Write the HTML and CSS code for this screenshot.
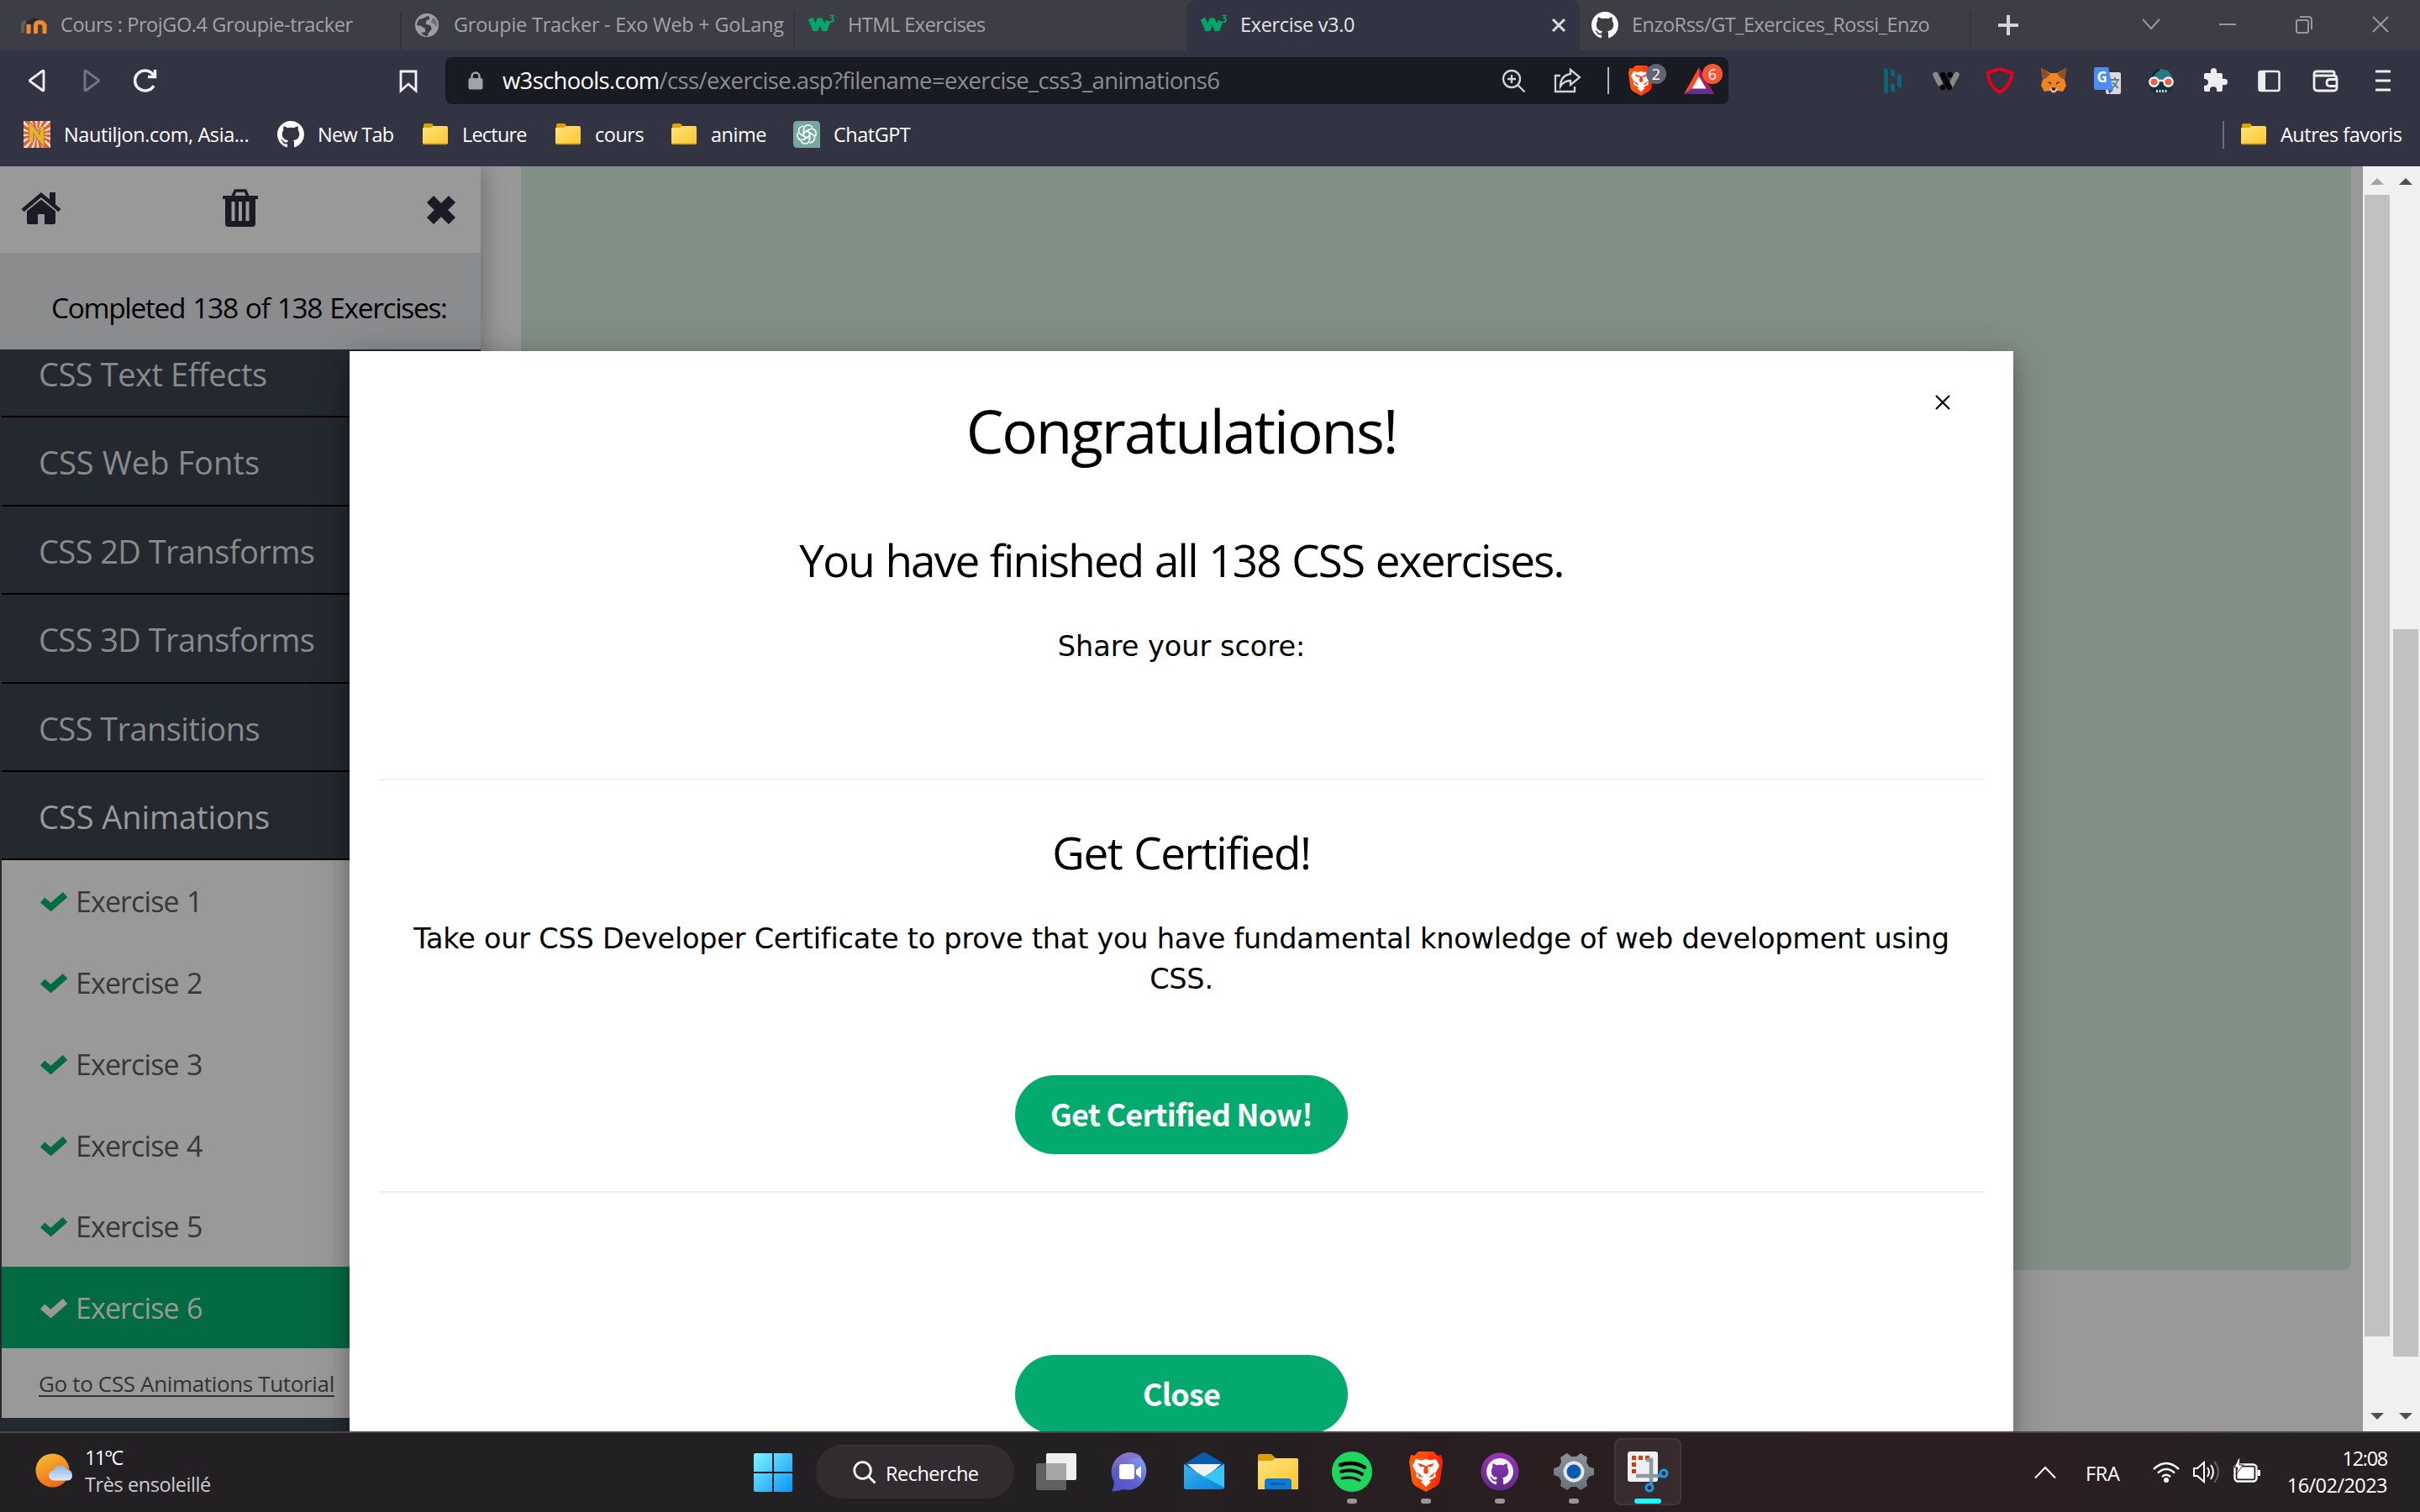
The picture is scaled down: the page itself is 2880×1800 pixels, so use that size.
FILE: index.html
```html
<!DOCTYPE html>
<html lang="fr">
<head>
<meta charset="utf-8">
<title>Exercise v3.0</title>
<link rel="stylesheet" href="styles.css">
</head>
<body>
<svg class="defs" width="0" height="0" aria-hidden="true">
  <defs>
    <linearGradient id="gFolder" x1="0" y1="0" x2="1" y2="1"><stop offset="0" stop-color="#ffe47c"/><stop offset="1" stop-color="#fdc52f"/></linearGradient>
    <linearGradient id="gWin" gradientUnits="userSpaceOnUse" x1="0" y1="0" x2="46" y2="46"><stop offset="0" stop-color="#7df5ff"/><stop offset="1" stop-color="#0a94ff"/></linearGradient>
    <linearGradient id="gChat" x1="0" y1="1" x2="0.8" y2="0"><stop offset="0" stop-color="#5050c8"/><stop offset="0.45" stop-color="#5b5fd0"/><stop offset="1" stop-color="#8aa0f0"/></linearGradient>
    <linearGradient id="gMail" x1="0" y1="0" x2="1" y2="1"><stop offset="0" stop-color="#34b9f0"/><stop offset="1" stop-color="#0f7fd8"/></linearGradient>
    <linearGradient id="gSun" x1="0.2" y1="0" x2="0.7" y2="1"><stop offset="0" stop-color="#f2bd32"/><stop offset="1" stop-color="#f0650f"/></linearGradient>
    <linearGradient id="gCloud" x1="0" y1="0" x2="0" y2="1"><stop offset="0" stop-color="#8fb2ee"/><stop offset="1" stop-color="#dce9fc"/></linearGradient>
    <linearGradient id="gLion" x1="0" y1="0" x2="1" y2="0"><stop offset="0" stop-color="#ff5a0a"/><stop offset="0.5" stop-color="#ff4a10"/><stop offset="1" stop-color="#ff1c00"/></linearGradient>
    <linearGradient id="gGit" x1="0" y1="0" x2="0" y2="1"><stop offset="0" stop-color="#9a35b8"/><stop offset="1" stop-color="#5b2a86"/></linearGradient>
    <linearGradient id="gGear" x1="0" y1="0" x2="0" y2="1"><stop offset="0" stop-color="#8b9197"/><stop offset="1" stop-color="#66727c"/></linearGradient>
  </defs>
  <symbol id="octocat" viewBox="0 0 16 16"><path d="M8 0C3.58 0 0 3.58 0 8c0 3.54 2.29 6.53 5.47 7.59.4.07.55-.17.55-.38 0-.19-.01-.82-.01-1.49-2.01.37-2.53-.49-2.69-.94-.09-.23-.48-.94-.82-1.13-.28-.15-.68-.52-.01-.53.63-.01 1.08.58 1.23.82.72 1.21 1.87.87 2.33.66.07-.52.28-.87.51-1.07-1.78-.2-3.64-.89-3.64-3.95 0-.87.31-1.59.82-2.15-.08-.2-.36-1.02.08-2.12 0 0 .67-.21 2.2.82.64-.18 1.32-.27 2-.27.68 0 1.36.09 2 .27 1.53-1.04 2.2-.82 2.2-.82.44 1.1.16 1.92.08 2.12.51.56.82 1.27.82 2.15 0 3.07-1.87 3.75-3.65 3.95.29.25.54.73.54 1.48 0 1.07-.01 1.93-.01 2.2 0 .21.15.46.55.38A8.013 8.013 0 0016 8c0-4.42-3.58-8-8-8z"/></symbol>
  <symbol id="folder" viewBox="0 0 32 32"><path d="M2 5q0-2 2-2h7q2 0 2.500 2l.5 2H28v6H2z" fill="#dda100"/><path d="M1 9q0-1 1-1l9 0 3-2h15q2 0 2 2v18q0 2-2 2H3q-2 0-2-2z" fill="url(#gFolder)"/><path d="M2 27.500h28" stroke="#c08f1c" stroke-width="1.500"/></symbol>
  <symbol id="w3" viewBox="0 0 32 32"><path d="M3.500 8l6 14 5-13.500 6 13.500 4-11" fill="none" stroke="#04a56b" stroke-width="6" stroke-linejoin="bevel"/><path d="M26.500 4.500h4.500l-2.500 3q3 0 2.500 2.500t-4 2" fill="none" stroke="#04a56b" stroke-width="1.600"/></symbol>
  <symbol id="check" viewBox="0 0 32 24"><path d="M2.500 10.500l10 8.500L29.500 4" fill="none" stroke="currentColor" stroke-width="8"/></symbol>
  <symbol id="lion" viewBox="0 0 40 48"><path d="M11 0h18l5 5 4-1 2 8-3 22q-1 5-6 8l-11 6-11-6q-5-3-6-8L0 12l2-8 4 1z" fill="url(#gLion)"/><path d="M8 9l7 1.500L20 9l5 1.500L32 9l4 8-5 9 1 4-7 4-5 3-5-3-7-4 1-4-5-9zM14 36l6-3 6 3-6 6z" fill="#fff"/><path d="M10 14l8 2v2l-5 0zM30 14l-8 2v2l5 0zM18 17h4l1 8-3 2-3-2zM9 24l8 7-5-1zM31 24l-8 7 5-1z" fill="#ff4310"/></symbol>
</svg>

<div class="desktop">
  <header class="browser">
    <div class="tabs">
      <div class="tab tab-first">
        <svg class="i32" viewBox="0 0 32 32"><path d="M4 13L17 7l9 4-9 5z" fill="#29292d"/><path d="M3 25V16q0-4 4-4" stroke="#6c5b55" stroke-width="4" fill="none"/><path d="M10 26V15M18.500 26V16q0-3.500 4.500-3.500t6 3.500v10" stroke="#f08a2c" stroke-width="5" fill="none"/></svg>
        <span class="t1">Cours : ProjGO.4 Groupie-tracker</span>
      </div>
      <div class="tab">
        <svg class="i32" viewBox="0 0 32 32"><circle cx="16" cy="16" r="14" fill="#9b9ea9"/><path d="M17 5q3 1 2 4l-4 2 0 4 5 1 2 4-4 5-1 4q-5 0-8-4l5-1 0-4-5-3-5-1q0-4 3-7l4-1z" fill="#3d3d45"/><path d="M24 7q5 5 4 11l-4-4-3-1 1-4z" fill="#3d3d45" opacity="0.500"/></svg>
        <span class="t2">Groupie Tracker - Exo Web + GoLang</span>
      </div>
      <div class="tab tab-plain">
        <svg class="i32"><use href="#w3"/></svg>
        <span class="t3">HTML Exercises</span>
      </div>
      <div class="tab tab-active">
        <svg class="i32"><use href="#w3"/></svg>
        <span class="t4">Exercise v3.0</span>
        <svg class="tab-close" viewBox="0 0 18 18"><path d="M2 2l14 14M16 2L2 16" stroke="#dcdce0" stroke-width="3"/></svg>
      </div>
      <div class="tab tab-last">
        <svg class="i32 white"><use href="#octocat"/></svg>
        <span class="t5">EnzoRss/GT_Exercices_Rossi_Enzo</span>
      </div>
      <svg class="tab-new" viewBox="0 0 26 26"><path d="M13 1v24M1 13h24" stroke="#d4d4d8" stroke-width="4"/></svg>
      <div class="window-buttons">
        <svg viewBox="0 0 24 24"><path d="M2 6l10 11L22 6"/></svg>
        <svg viewBox="0 0 24 24"><path d="M2 12h20"/></svg>
        <svg viewBox="0 0 24 24"><rect x="3" y="7" width="14" height="15" rx="2"/><path d="M7 3h10q4 0 4 4v11"/></svg>
        <svg viewBox="0 0 24 24"><path d="M3 3l18 18M21 3L3 21"/></svg>
      </div>
    </div>

    <div class="toolbar">
      <div class="nav">
        <svg viewBox="0 0 32 32"><path d="M24 5v22q0 1.500-1.500.5L8 17q-1-1 0-2L22.500 4.500Q24 3.500 24 5z"/></svg>
        <svg class="dim" viewBox="0 0 32 32"><path d="M9 5v22q0 1.500 1.500.5L25 17q1-1 0-2L10.500 4.500Q9 3.500 9 5z"/></svg>
        <svg viewBox="0 0 32 32"><path d="M27 22A12 12 0 1 1 27 10" stroke-width="3.500"/><path d="M28.500 3v8.500h-8.500" stroke-width="3.500"/></svg>
        <svg class="nav-mark" viewBox="0 0 32 32"><path d="M7 5h18v23l-9-8-9 8z"/></svg>
      </div>
      <div class="url">
        <svg class="lock" viewBox="0 0 18 22"><rect x="0.500" y="8" width="17" height="13.500" rx="2" fill="#a0a3ae"/><path d="M4.500 9V6a4.500 4.500 0 0 1 9 0v3" fill="none" stroke="#a0a3ae" stroke-width="2.500"/></svg>
        <span class="host">w3schools.com</span><span class="path">/css/exercise.asp?filename=exercise_css3_animations6</span>
        <div class="url-icons">
          <svg class="i32 line" viewBox="0 0 32 32"><circle cx="13" cy="14" r="10"/><path d="M20.500 21.500l8 8M8 14h10M13 9v10"/></svg>
          <svg class="i32 line" viewBox="0 0 32 32"><path d="M7 10H1v19h23v-6"/><path d="M19 3l11 9-11 9v-5q-8 0-12 7 0-13 12-15z"/></svg>
          <i class="bar"></i>
          <span class="shield"><svg viewBox="0 0 40 48"><use href="#lion"/></svg><b>2</b></span>
          <span class="bat"><svg viewBox="0 0 36 32"><path d="M18 0L0 32l10-6 8-14z" fill="#ff4c24"/><path d="M18 0l18 32-10-6-8-14z" fill="#9e1f63"/><path d="M0 32h36l-10-7H10z" fill="#662d91"/><path d="M18 11l8.500 14.500h-17z" fill="#fff"/></svg><b>6</b></span>
        </div>
      </div>
      <div class="extensions">
        <svg viewBox="0 0 32 32"><g fill="#0d6475"><path d="M6 1l5 1.500v29L6 30zM14 2l5 2v8l-5-2zM14 19l5 2v9l-5-2zM22 8l5 2v15l-5-2z"/></g></svg>
        <svg viewBox="0 0 32 32"><g stroke-width="6.500" stroke-linecap="round"><path d="M3.500 9l5 10M28.500 9l-7 13" stroke="#8b8888"/><path d="M12 9l8 15M12 24h.1M20.500 9h.1" stroke="#050507"/></g></svg>
        <svg viewBox="0 0 32 32"><path d="M16 2l14 4.500q0 15-14 23.500Q2 21.500 2 6.500z" fill="none" stroke="#e8001d" stroke-width="3.800"/></svg>
        <svg viewBox="0 0 32 32"><path d="M1 1l11 6h8l11-6-2 14 2 7-4 7-7-1-4 3-4-3-7 1-4-7 2-7z" fill="#f08423"/><path d="M1 1l11 7-5 5-4 2zM31 1L20 8l5 5 4 2z" fill="#8f4f27"/><path d="M8 17l5 1v3zM24 17l-5 1v3z" fill="#3c3b44"/><path d="M11 26l3-1h4l3 1-3 4h-4z" fill="#d8c4b6"/><path d="M13.500 24.500h5l-1 3h-3z" fill="#161616"/></svg>
        <svg viewBox="0 0 32 32"><rect x="14" y="6" width="18" height="26" rx="2" fill="#d9dadd"/><path d="M2 0h15l6 27H2q-2 0-2-2V2q0-2 2-2z" fill="#4b8cf5"/><path d="M17 27h6l-5 5z" fill="#3b55c2"/><text x="3.500" y="18" class="g">G</text><path d="M20 15h10M25 12v3M28 16q-2 6-7 9M22 18l7 7" stroke="#647b88" stroke-width="1.800" fill="none"/></svg>
        <svg viewBox="0 0 32 32"><path d="M3 30V15Q3 2 16 2t13 13v15z" fill="#173039"/><path d="M3 15Q5 2 16 2q13 1 13 13z" fill="#2e7585"/><path d="M5 13Q7 5 14 3" stroke="#12242b" stroke-width="2.500" fill="none"/><g fill="#e8634a" stroke="#fff" stroke-width="2.200"><circle cx="7.500" cy="17.500" r="5.200"/><circle cx="24.500" cy="17.500" r="5.200"/></g><path d="M13 16h6" stroke="#fff" stroke-width="2.500"/><path d="M10 28.500h13" stroke="#bfe4ea" stroke-width="3" stroke-dasharray="2 1.500"/></svg>
        <svg viewBox="0 0 32 32"><path d="M3 9q0-2 2-2h6q-1-6 3.500-6T18 7h5q2 0 2 2v5q6-1 6 3.500T25 21v6q0 2-2 2h-5q1-6-4-6t-4 6H5q-2 0-2-2v-5q5 0 5-4t-5-4z" fill="#eeeeef"/></svg>
        <svg viewBox="0 0 32 32"><rect x="4.500" y="5" width="24" height="23" rx="2" fill="none" stroke="#eeeeef" stroke-width="2.500"/><path d="M4 5h8v23H4z" fill="#eeeeef"/></svg>
        <svg class="wallet" viewBox="0 0 32 32"><g fill="none" stroke="#eeeeef" stroke-width="2.800"><path d="M26 10V7q0-2-2-2H5Q2 5 2 8v16q0 4 4 4h19q4 0 4-4V14q0-4-4-4H3M30 14.500H21q-4 0-4 4t4 4h9"/></g></svg>
        <svg class="menu" viewBox="0 0 32 32"><path d="M7 5h18M7 16h18M7 27h18" stroke="#eeeeef" stroke-width="3"/></svg>
      </div>
    </div>

    <div class="bookmarks">
      <div class="bm"><svg class="i32 clip" viewBox="0 0 32 32"><rect width="32" height="32" fill="#f3e3da"/><circle cx="16" cy="16" r="14" fill="none" stroke="#de6038" stroke-width="20" stroke-dasharray="3.200 2.300"/><path d="M9 25V7l13 17V7" fill="none" stroke="#a9702f" stroke-width="6.500"/><path d="M9 25V7l13 17V7" fill="none" stroke="#eeb02c" stroke-width="4.500"/></svg><span class="b1">Nautiljon.com, Asia...</span></div>
      <div class="bm"><svg class="i32 white"><use href="#octocat"/></svg><span class="b2">New Tab</span></div>
      <div class="bm"><svg class="i32"><use href="#folder"/></svg><span class="b3">Lecture</span></div>
      <div class="bm"><svg class="i32"><use href="#folder"/></svg><span class="b4">cours</span></div>
      <div class="bm"><svg class="i32"><use href="#folder"/></svg><span class="b5">anime</span></div>
      <div class="bm"><svg class="i32" viewBox="0 0 32 32"><path d="M5 0h22q5 0 5 5v27H5q-5 0-5-5V5q0-5 5-5z" fill="#75a99c"/><g fill="none" stroke="#fff" stroke-width="1.600"><path id="petal" d="M12.500 18V9.500q1-5 6-4.500 3 .5 4.500 3M12.500 14l6.500-3.800"/><use href="#petal" transform="rotate(60 16 16)"/><use href="#petal" transform="rotate(120 16 16)"/><use href="#petal" transform="rotate(180 16 16)"/><use href="#petal" transform="rotate(240 16 16)"/><use href="#petal" transform="rotate(300 16 16)"/></g></svg><span class="b6">ChatGPT</span></div>
      <div class="bm bm-other"><svg class="i32"><use href="#folder"/></svg><span class="b7">Autres favoris</span></div>
    </div>
  </header>

  <main class="page">
    <aside class="sidebar">
      <div class="side-icons">
        <svg viewBox="0 0 48 40"><path d="M24 9.500L7 23v14q0 2 2 2h11V27h8v12h11q2 0 2-2V23z"/><path d="M2 22.500L24 4l22 18.500" fill="none" stroke="#1a1b24" stroke-width="4.500"/><path d="M7 22.500L24 8.500l17 14" fill="none" stroke="#999" stroke-width="1.500"/><path d="M34 1h7v16l-7-6z"/></svg>
        <svg viewBox="0 0 42 46"><path d="M12 9l3-7h12l3 7" fill="none" stroke="#1a1b24" stroke-width="3.500"/><path d="M0 8h42v4h-3v29q0 4-4 4H7q-4 0-4-4V12H0z"/><path d="M12.500 15v23M21 15v23M29.500 15v23" stroke="#999" stroke-width="4"/></svg>
        <svg viewBox="0 0 36 36"><path d="M5 5l26 26M31 5L5 31" stroke="#1a1b24" stroke-width="11.500"/></svg>
      </div>
      <div class="completed">Completed 138 of 138 Exercises:</div>
      <nav class="topics">
        <div class="topic s1">CSS Text Effects</div>
        <div class="topic s2">CSS Web Fonts</div>
        <div class="topic s3">CSS 2D Transforms</div>
        <div class="topic s3">CSS 3D Transforms</div>
        <div class="topic s4">CSS Transitions</div>
        <div class="topic s5 open">CSS Animations</div>
        <div class="exercise"><svg><use href="#check"/></svg>Exercise 1</div>
        <div class="exercise"><svg><use href="#check"/></svg>Exercise 2</div>
        <div class="exercise"><svg><use href="#check"/></svg>Exercise 3</div>
        <div class="exercise"><svg><use href="#check"/></svg>Exercise 4</div>
        <div class="exercise"><svg><use href="#check"/></svg>Exercise 5</div>
        <div class="exercise current"><svg><use href="#check"/></svg>Exercise 6</div>
        <div class="tutorial"><a>Go to CSS Animations Tutorial</a></div>
      </nav>
    </aside>
    <section class="content"></section>
    <div class="scrollbar scroll-inner"><i class="up"></i><i class="thumb"></i><i class="down"></i></div>
    <div class="scrollbar scroll-outer"><i class="up"></i><i class="thumb"></i><i class="down"></i></div>

    <div class="modal-clip">
      <div class="modal">
        <svg class="modal-close" viewBox="0 0 18 18"><path d="M1 1l16 16M17 1L1 17" stroke="#000" stroke-width="2.200"/></svg>
        <h1>Congratulations!</h1>
        <h2 class="finished">You have finished all 138 CSS exercises.</h2>
        <p class="share">Share your score:</p>
        <hr class="hr1">
        <h2 class="certified">Get Certified!</h2>
        <p class="pitch">Take our CSS Developer Certificate to prove that you have fundamental knowledge of web development using<br>CSS.</p>
        <button class="pill now">Get Certified Now!</button>
        <hr class="hr2">
        <button class="pill close">Close</button>
      </div>
    </div>
  </main>

  <footer class="taskbar">
    <div class="weather">
      <svg viewBox="0 0 46 42"><circle cx="20.500" cy="20.500" r="20" fill="url(#gSun)"/><path d="M22 32.500a6 6 0 0 1 0-12q2-6 8-6 5 0 7 5 7 0 7 7 0 6-6 6z" fill="url(#gCloud)"/></svg>
      <div><div class="temp">11°C</div><div class="sky">Très ensoleillé</div></div>
    </div>
    <svg class="start" viewBox="0 0 46 46"><path d="M2 0h20v22H0V2q0-2 2-2zM24 0h20q2 0 2 2v20H24zM0 24h22v22H2q-2 0-2-2zM24 24h22v20q0 2-2 2H24z" fill="url(#gWin)"/></svg>
    <div class="search"><svg viewBox="0 0 28 28"><circle cx="11.500" cy="11.500" r="9.800"/><path d="M18.500 18.500l8 8"/></svg><span>Recherche</span></div>
    <div class="apps">
      <div class="app"><svg viewBox="0 0 48 48"><rect x="12" y="2" width="36" height="32" rx="2" fill="#efeff0"/><rect y="14" width="36" height="32" rx="2" fill="#6c6c6c" fill-opacity="0.850"/><path d="M12 14h24v20H12z" fill="#a6a6a6"/></svg></div>
      <div class="app"><svg viewBox="0 0 48 48"><path d="M24 1a22.500 22.500 0 1 1-9 44q-6 3-13 2 3-5 3-11A23 23 0 0 1 24 1z" fill="url(#gChat)"/><path d="M2.500 22Q6 2 24 1q10 0 14 6Q16 8 2.500 22z" fill="#8b6bc0" opacity="0.700"/><rect x="11" y="15" width="18" height="18" rx="3" fill="#fff"/><path d="M31 22l6-5v15l-6-5z" fill="#fff"/></svg></div>
      <div class="app"><svg viewBox="0 0 48 48"><path d="M0 15L21 2q3-2 6 0l21 13-4 6H4z" fill="#0a5cae"/><path d="M4 15h40L26 31h-4z" fill="#f3f3f3"/><path d="M0 15l24 15 24-15v28q0 2-2 2H2q-2 0-2-2z" fill="url(#gMail)"/><path d="M48 15v28L24 30z" fill="#35c7f5"/></svg></div>
      <div class="app"><svg viewBox="0 0 48 48"><path d="M0 5q0-2 2-2h14l5 5v6H0z" fill="#dd9f00"/><path d="M0 11h17l4-3h25q2 0 2 2v35H0z" fill="url(#gFolder)"/><path d="M8 45V36q0-4 4-4h24q4 0 4 4v9z" fill="#0b7cd2"/><path d="M15 38.500h18" stroke="#07529b" stroke-width="2"/></svg></div>
      <div class="app run"><svg viewBox="0 0 48 48"><circle cx="24" cy="24" r="24" fill="#1ed760"/><g fill="none" stroke="#000" stroke-linecap="round"><path d="M10 16q16-5 29 3" stroke-width="4.500"/><path d="M11 24q14-4 25 3" stroke-width="4"/><path d="M12 32q12-3 21 2.500" stroke-width="3"/></g></svg></div>
      <div class="app run"><svg viewBox="0 0 48 48"><use href="#lion" x="4" width="40" height="48"/></svg></div>
      <div class="app run"><svg viewBox="0 0 48 48"><circle cx="24" cy="24" r="22.500" fill="url(#gGit)"/><svg x="8" y="8" width="32" height="32" fill="#f3f3f6"><use href="#octocat"/></svg></svg></div>
      <div class="app run"><svg viewBox="0 0 48 48"><g fill="url(#gGear)"><path d="M16 2l5 4h6l5-4 8 5-1 6 3 5 6 2v8l-6 2-3 5 1 6-8 5-5-4h-6l-5 4-8-5 1-6-3-5-6-2v-8l6-2 3-5-1-6z"/></g><circle cx="24" cy="24" r="12.500" fill="#e3e5e7"/><circle cx="24" cy="24" r="8.500" fill="#0a5cae"/></svg></div>
      <div class="app focus"><svg viewBox="0 0 48 48"><rect width="36" height="36" rx="3" fill="#eef0f2"/><path d="M5 5h5v5H5zM13 5h5v5h-5zM21 5h5v5h-5zM5 13h5v5H5zM5 21h5v5H5z" fill="#d43b0b"/><path d="M22 10h6v26M10 29h26" stroke="#8f979e" stroke-width="4.500" fill="none"/><g fill="none" stroke="#1f9be6" stroke-width="3"><circle cx="43" cy="26" r="4"/><circle cx="26" cy="43" r="4"/><path d="M36 29h3M28 36v3" stroke-width="4"/></g></svg></div>
    </div>
    <div class="tray">
      <svg class="chev" viewBox="0 0 26 16"><path d="M1 14.500L13 2l12 12.500" fill="none" stroke="#fff" stroke-width="2"/></svg>
      <span class="lang">FRA</span>
      <svg class="sys" viewBox="0 0 32 32"><g fill="none" stroke="#fff" stroke-width="2.400"><path d="M1 13q15-14 30 0M6 17.500q10-9 20 0M11 22q5-4.500 10 0"/></g><circle cx="16" cy="26" r="3" fill="#fff"/></svg>
      <svg class="sys" viewBox="0 0 32 32"><g fill="none" stroke="#fff" stroke-width="2"><path d="M1 12h4l8-7v23l-8-7H1zM17 11q4 5 0 11M21 8q6 8 0 17"/><path d="M25 4q10 12 0 25" stroke="#665f61"/></g></svg>
      <svg class="sys" viewBox="0 0 32 32"><rect x="1.500" y="7.500" width="26" height="20" rx="4" fill="none" stroke="#fff" stroke-width="2.400"/><rect x="4.500" y="10.500" width="20" height="14" rx="1" fill="#fff"/><path d="M29 14h3v7h-3z" fill="#fff"/><path d="M6 0L1 11h4l-2 8 9-11H7l1-8z" fill="#fff" stroke="#2a2223"/></svg>
      <div class="clock"><div class="time">12:08</div><div class="date">16/02/2023</div></div>
    </div>
  </footer>
</div>
</body>
</html>
```
FILE: styles.css
```css
* { box-sizing: border-box; }
html, body { margin: 0; height: 100%; }
body {
  font-family: "Open Sans", "Noto Sans", sans-serif;
  font-size: 23.5px;
  overflow: hidden;
  white-space: nowrap;
}
.defs { position: absolute; }
svg { display: block; flex: none; overflow: visible; }
.desktop { width: 2880px; height: 1800px; display: flex; flex-direction: column; }
.i32 { width: 32px; height: 32px; }
.clip { overflow: hidden; }
.white { fill: #fff; }

/* Browser chrome */
.browser { height: 198px; background: #323443; flex: none; color: #fff; }
.tabs { display: flex; height: 60px; background: #3d3d45; }
.tab {
  width: 468px; display: flex; align-items: center; gap: 16px;
  padding: 0 0 0 14px; color: #a3a3a7; line-height: 32px;
}
.tab span { padding-bottom: 2px; }
.tab-first { width: 478px; padding-left: 24px; }
.tab-first, .tab:nth-child(2), .tab-last {
  background: linear-gradient(#35353a, #35353a) right bottom / 2px 46px no-repeat;
}
.tab-plain { width: 466px; padding-left: 15px; }
.tab-active { padding-left: 16px; background: #323443; color: #e4e4e8; font-weight: 500; border-radius: 10px 10px 0 0; }
.tab-close { width: 18px; height: 18px; margin-left: auto; margin-right: 16px; }
.tab-last { width: 466px; padding-left: 14px; }
.tab-new { width: 26px; height: 26px; margin: 17px 0 0 31px; }
.window-buttons { margin: 17px 35px 0 auto; display: flex; gap: 67px; }
.window-buttons svg { width: 24px; height: 24px; fill: none; stroke: #97979c; stroke-width: 2; }
.t1 { letter-spacing: -0.420px; }
.t2 { letter-spacing: -0.240px; }
.t3 { letter-spacing: -0.500px; }
.t4 { letter-spacing: -0.350px; }
.t5 { letter-spacing: -0.500px; }

.toolbar { display: flex; height: 72px; align-items: center; }
.nav { width: 530px; display: flex; padding-left: 28px; gap: 32px; }
.nav svg { width: 32px; height: 32px; fill: none; stroke: #f1f1f3; stroke-width: 2.800; }
.nav .dim { stroke: #747683; }
.nav .nav-mark { margin-left: auto; margin-right: 28px; }
.url {
  width: 1527px; height: 56px; background: #191b23; border-radius: 8px;
  display: flex; align-items: center; padding: 0 8px 0 27px; font-size: 27.5px; line-height: 56px;
}
.lock { width: 18px; height: 22px; margin-right: 23px; }
.host { letter-spacing: -0.700px; }
.path { color: #8c8d93; letter-spacing: -0.630px; }
.url-icons { display: flex; align-items: center; margin-left: auto; }
.line { fill: none; stroke: #d2d2d6; stroke-width: 2.300; }
.url-icons .line + .line { margin-left: 32px; }
.bar { width: 2px; height: 32px; background: #b5b5ba; margin: 0 23px 0 31px; }
.shield, .bat { position: relative; width: 45px; height: 36px; margin-right: 21px; }
.shield svg { width: 30px; height: 36px; }
.bat { margin: 0; }
.bat svg { width: 36px; height: 32px; margin-top: 2px; }
.shield b, .bat b {
  position: absolute; left: 21px; top: -2px; width: 24px; height: 24px; border-radius: 12px;
  background: #626576; font: 500 18px/24px "Open Sans", sans-serif; text-align: center;
}
.bat b { background: #ff5432; left: 22px; }
.extensions { display: flex; gap: 32px; margin-left: 179px; }
.extensions svg { width: 32px; height: 32px; }
.extensions .wallet { margin-left: 4px; }
.extensions .menu { margin-left: 4px; }
.g { font: 700 17px "Open Sans", sans-serif; fill: #fff; }

.bookmarks {
  display: grid; grid-template-columns: 302px 172px 158px 138px 146px 200px 1fr;
  height: 66px; padding: 0 0 10px 28px; align-items: center;
}
.bm { display: flex; align-items: center; gap: 16px; line-height: 32px; }
.bm span { padding-bottom: 1px; }
.bm-other { width: 235px; margin-left: auto; border-left: 2px solid #6b6d79; padding-left: 19px; }
.b1 { letter-spacing: -0.400px; }
.b2 { letter-spacing: -0.750px; }
.b3 { letter-spacing: -0.800px; }
.b4 { letter-spacing: -0.500px; }
.b5 { letter-spacing: -0.500px; }
.b6 { letter-spacing: -0.500px; }
.b7 { letter-spacing: -0.500px; }

/* Page under the dimming overlay */
.page { position: relative; flex: 1; display: flex; background: #999; overflow: hidden; }
.sidebar { width: 572px; height: 100%; box-shadow: 0 0 28px rgba(0, 0, 0, 0.340); display: flex; flex-direction: column; background: #999; }
.side-icons { height: 103px; display: flex; align-items: center; justify-content: space-between; padding: 0 29px 4px 25px; fill: #1a1b24; }
.side-icons svg:nth-child(1) { width: 48px; height: 40px; }
.side-icons svg:nth-child(2) { width: 42px; height: 46px; margin-right: 8px; }
.side-icons svg:nth-child(3) { width: 36px; height: 36px; margin-top: 5px; }
.completed { height: 115px; background: #8b8c8e; padding: 8px 0 0 61px; font-size: 33.500px; line-height: 115px; letter-spacing: -1.350px; word-spacing: 1.800px; color: #000; }
.topics { flex: 1; background: #23292f; padding-left: 2px; overflow: hidden; }
.topic { height: 105.400px; border-bottom: 2px solid #000; padding: 3px 0 0 44px; line-height: 100px; font-size: 38px; color: #8a8a8a; }
.topic:first-child { margin-top: -24px; }
.open { color: #999; }
.s1 { letter-spacing: -0.450px; }
.s2 { letter-spacing: 0.050px; }
.s3 { letter-spacing: -0.570px; }
.s4 { letter-spacing: -0.570px; }
.s5 { letter-spacing: -0.070px; }
.exercise { height: 96.800px; background: #999; color: #383838; display: flex; align-items: center; gap: 10px; padding: 1px 0 0 46px; font-size: 34px; letter-spacing: -0.900px; word-spacing: 1.500px; }
.exercise svg { width: 32px; height: 24px; color: #046a42; }
.exercise.current { background: #046a42; color: #999; }
.exercise.current svg { color: #999; }
.tutorial { height: 83px; background: #999; color: #333; padding-left: 44px; font-size: 26px; line-height: 84px; letter-spacing: -0.350px; }
.tutorial a { text-decoration: underline; text-decoration-thickness: 2px; text-underline-offset: 4px; }
.content { width: 2178px; height: 1314px; margin-left: 48px; background: #828f86; border-radius: 0 0 10px 0; }

.scrollbar { width: 34px; background: #f0f0f0; display: flex; flex-direction: column; align-items: center; padding: 14px 0; height: 100%; }
.scroll-inner { margin-left: 14px; }
.thumb { width: 30px; background: #c1c1c1; }
.scroll-inner .thumb { height: 1359px; margin-top: 12px; }
.scroll-outer .thumb { height: 866px; margin-top: 529px; }
.up { border: 8px solid transparent; border-top: 0; border-bottom: 8px solid #505050; }
.scroll-inner .up { border-bottom-color: #a3a3a3; }
.down { border: 8px solid transparent; border-bottom: 0; border-top: 8px solid #505050; margin-top: auto; }

/* Result dialog, floating over the page */
.modal-clip { position: absolute; left: 0; top: 0; width: 2812px; height: 1506px; overflow: hidden; }
.modal {
  position: absolute; left: 416px; top: 220px; width: 1980px; height: 1320px;
  background: #fff; padding: 45px 35px 0; color: #000;
  box-shadow: 0 8px 20px rgba(0, 0, 0, 0.200), 0 8px 44px rgba(0, 0, 0, 0.220);
  display: flex; flex-direction: column; align-items: center;
}
.modal-close { position: absolute; right: 75px; top: 52px; width: 18px; height: 18px; }
.modal h1 { margin: 0; font-size: 71px; font-weight: 400; line-height: 100px; letter-spacing: -2.100px; }
.modal h2 { margin: 0; font-size: 53px; font-weight: 400; line-height: 80px; letter-spacing: -1.800px; word-spacing: 1.500px; }
.modal .finished { margin-top: 64px; }
.modal .certified { margin-top: 46px; letter-spacing: -1.400px; }
.modal p { margin: 0; font: 33.5px/48px "DejaVu Sans", sans-serif; text-align: center; }
.modal .share { margin-top: 39px; }
.modal .pitch { margin-top: 39px; letter-spacing: -0.220px; }
.modal hr { width: 100%; height: 2px; border: 0; margin: 0; background: #eee; flex: none; }
.modal .hr1 { margin-top: 133px; }
.modal .hr2 { margin-top: 44px; }
.pill {
  width: 396px; height: 94px; border: 0; border-radius: 47px; background: #04aa6d; color: #fff; flex: none;
  font: 700 36px "Noto Sans CJK SC", "Noto Sans", sans-serif; letter-spacing: -0.800px; padding: 0 0 4px;
}
.now { margin-top: 90px; }
.close { margin-top: 193px; }

/* Taskbar */
.taskbar {
  height: 96px; flex: none; display: flex; align-items: flex-start; border-top: 2px solid #484546; color: #fff;
  background: linear-gradient(90deg, #222023 0%, #232022 45%, #2b1d20 68%, #2c1d22 82%, #262122 92%, #242122 100%);
}
.weather { width: 897px; display: flex; padding: 13px 0 0 42px; gap: 13px; line-height: 32px; }
.weather svg { width: 46px; height: 42px; margin-top: 11px; }
.temp { letter-spacing: -1.800px; }
.sky { color: #cdcdcd; letter-spacing: -0.420px; }
.start { width: 46px; height: 46px; margin-top: 24px; }
.search { width: 236px; height: 64px; margin: 14px 6px 0 28px; border-radius: 32px; background: #312c2f; border-top: 1px solid #3d383a; display: flex; align-items: center; padding-left: 44px; gap: 11px; letter-spacing: -0.500px; }
.search svg { width: 28px; height: 28px; fill: none; stroke: #fff; stroke-width: 2.800; }
.search span { padding-top: 2px; }
.apps { display: flex; padding-top: 6px; }
.app { width: 80px; height: 80px; margin: 0 4px; border-radius: 8px; display: flex; flex-direction: column; align-items: center; padding-top: 16px; }
.app > svg { width: 48px; height: 48px; }
.run::after, .focus::after { content: ""; width: 12px; height: 6px; border-radius: 3px; background: #9a9697; margin-top: 8px; }
.focus { background: #382b2f; border: 2px solid #43373a; padding-top: 14px; }
.focus::after { width: 32px; background: #1ff5ff; }
.tray { margin-left: auto; width: 459px; display: flex; height: 94px; align-items: center; padding-right: 39px; line-height: 32px; }
.chev { width: 26px; height: 16px; margin-top: 0; }
.lang { margin: 1px 0 0 35px; width: 80px; letter-spacing: -0.300px; }
.sys { width: 32px; height: 32px; margin: 0 16px 2px 0; }
.clock { margin-left: auto; text-align: right; padding-bottom: 3px; }
.time { letter-spacing: -1.300px; }
.date { letter-spacing: -0.550px; }
```
